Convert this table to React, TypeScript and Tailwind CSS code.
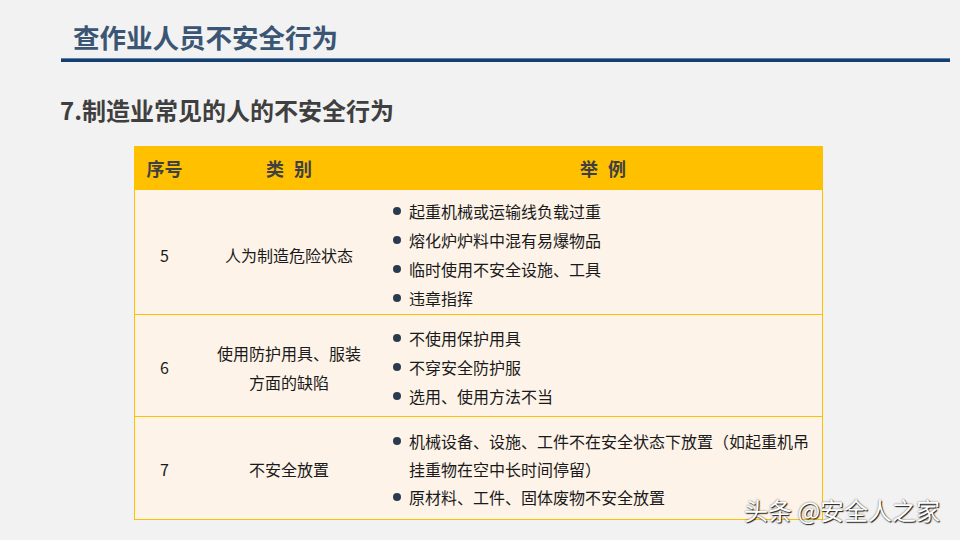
import React from 'react'

const font = { fontFamily: '"Noto Sans CJK SC", "Noto Sans", sans-serif' }

interface Row {
  no: string
  type: string[]
  items: string[]
  cls: string
}

const rows: Row[] = [
  {
    no: '5',
    type: ['人为制造危险状态'],
    items: ['起重机械或运输线负载过重', '熔化炉炉料中混有易爆物品', '临时使用不安全设施、工具', '违章指挥'],
    cls: 'h-[124px] pt-[6px] leading-[29px]',
  },
  {
    no: '6',
    type: ['使用防护用具、服装', '方面的缺陷'],
    items: ['不使用保护用具', '不穿安全防护服', '选用、使用方法不当'],
    cls: 'h-[102px] pt-[4px] leading-[29px] border-t border-[#ffc000]',
  },
  {
    no: '7',
    type: ['不安全放置'],
    items: ['机械设备、设施、工件不在安全状态下放置（如起重机吊挂重物在空中长时间停留）', '原材料、工件、固体废物不安全放置'],
    cls: 'h-[103px] pt-[2px] leading-[28px] border-t border-[#ffc000]',
  },
]

export default function App() {
  return (
    <div className="relative w-[960px] h-[540px] overflow-hidden bg-[#f2f2f2]" style={font}>
      {/* Page title */}
      <div className="pl-[73px] pt-[22px] text-[26.5px] leading-[30px] font-bold text-[#3b5674]">
        查作业人员不安全行为
      </div>
      <div className="mt-[6px] ml-[61px] w-[889px] h-[4px] bg-[#143f6e] border-t border-[#5f82aa]" />

      {/* Section heading */}
      <div className="mt-[34px] pl-[60px] text-[24px] leading-[28px] font-bold text-[#3f3f3f]">
        7.制造业常见的人的不安全行为
      </div>

      {/* Table */}
      <div className="mt-[22px] ml-[134px] w-[689px] border-x border-b border-[#ffc000] bg-[#fdf3e8]">
        <div className="grid grid-cols-[59px_190px_1fr] h-[44px] items-center bg-[#ffc000] text-[18px] font-bold text-[#404040] -mx-px px-px">
          <div className="text-center">序号</div>
          <div className="flex justify-center gap-[10px]">
            <span>类</span>
            <span>别</span>
          </div>
          <div className="flex justify-center gap-[10px]">
            <span>举</span>
            <span>例</span>
          </div>
        </div>

        {rows.map((row) => (
          <div
            key={row.no}
            className={`grid grid-cols-[59px_190px_1fr] items-center text-[16px] text-[#1a1a1a] ${row.cls}`}
          >
            <div className="text-center">{row.no}</div>
            <div className="text-center leading-[29px]">
              {row.type.map((t) => (
                <div key={t}>{t}</div>
              ))}
            </div>
            <div className="pl-[9px] pr-[4px]">
              {row.items.map((item) => (
                <div key={item} className="flex items-start">
                  <span className="mt-[10px] w-[8px] h-[8px] shrink-0 rounded-full bg-[#2b3b4f]" />
                  <span className="ml-[8px] flex-1">{item}</span>
                </div>
              ))}
            </div>
          </div>
        ))}
      </div>

      {/* Watermark */}
      <div className="absolute left-[744px] top-[495px] text-[24px] leading-[30px] text-white [text-shadow:1px_1px_1px_rgba(0,0,0,0.85),0_0_2px_rgba(0,0,0,0.6)]">
        头条 @安全人之家
      </div>
    </div>
  )
}
